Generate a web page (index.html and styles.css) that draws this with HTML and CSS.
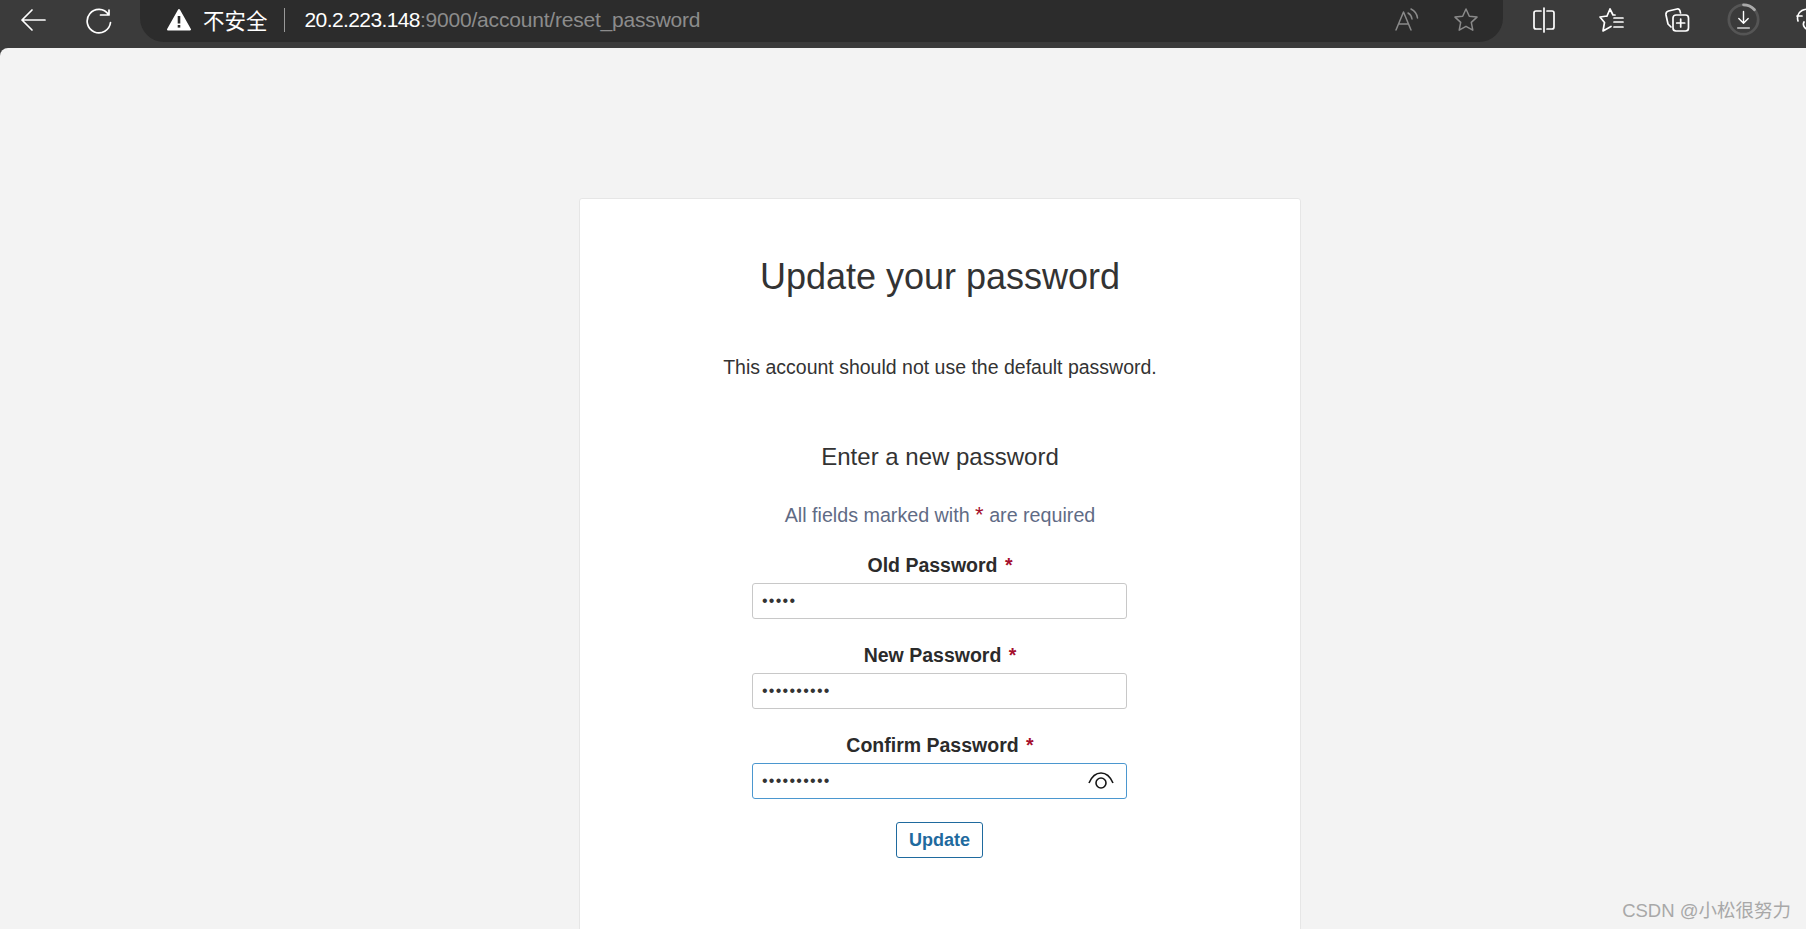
FILE: index.html
```html
<!DOCTYPE html>
<html lang="en">
<head>
    <meta charset="UTF-8">
    <title>Update your password</title>
    <link rel="stylesheet" href="styles.css">
</head>
<body>
    <!-- Browser toolbar -->
    <header class="toolbar">
        <svg class="nav-icon back-icon" viewBox="0 0 26 24"><path d="M25 12H2M12 2 2 12l10 10"/></svg>
        <svg class="nav-icon reload-icon" viewBox="0 0 26 26"><path d="M23 7v-5M23 7h-8.500M22.500 6.500a11.700 11.700 0 1 0 2 8"/></svg>
        <div class="address-bar">
            <svg class="warn-icon" viewBox="0 0 24 23"><path d="M12 2 23 21.500H1z" fill="#fff" stroke="#fff" stroke-width="2"/><rect x="10.700" y="8" width="2.600" height="7.500" fill="#2c2c2c"/><rect x="10.700" y="17" width="2.600" height="2.600" fill="#2c2c2c"/></svg>
            <span class="insecure">不安全</span>
            <span class="divider"></span>
            <span class="url"><span class="host">20.2.223.148</span>:9000/account/reset_password</span>
            <svg class="bar-icon read-icon" viewBox="0 0 24 24"><path d="M1 22 8.500 4 16 22M3.500 16h10M13 5c2 1 3.500 3 4 6M16 1c3 1.500 6 5 6.500 9"/></svg>
            <svg class="bar-icon star-icon" viewBox="0 0 26 26"><path d="m13 2 3.300 7.200 7.700.9-5.700 5.300 1.500 7.800L13 19.300l-6.800 3.900 1.500-7.800L2 10.100l7.700-.9z"/></svg>
        </div>
        <svg class="tool-icon split-icon" viewBox="0 0 26 26"><path d="M10 4H5a2 2 0 0 0-2 2v14a2 2 0 0 0 2 2h5M16 4h5a2 2 0 0 1 2 2v14a2 2 0 0 1-2 2h-5M13 1v24"/></svg>
        <svg class="tool-icon favs-icon" viewBox="0 0 26 26"><path d="m12 2 3 6h2M9 9l3-7M9 9 2 10l4.500 5.500L5 24l8-4.500M16 11h9M16 15h9M16 20h9"/></svg>
        <svg class="tool-icon coll-icon" viewBox="0 0 26 26"><path d="M7 20 4 17 2 8c-.300-2 .700-3.500 2.500-4L13 2c2-.300 3 .500 3.500 4"/><rect x="9" y="8" width="15.500" height="16" rx="3"/><path d="M16.700 12v8M12.700 16h8"/></svg>
        <div class="download">
            <svg class="ring-icon" viewBox="0 0 36 36"><circle cx="18" cy="18" r="16" stroke="#555"/><path d="M18 2a16 16 0 0 1 12 5.400" stroke="#aaa"/></svg>
            <svg class="down-icon" viewBox="0 0 16 20"><path d="M8 1v12M3 8.500 8 13.500l5-5"/><path d="M2 18.500h12" stroke="#aaa" stroke-width="2"/></svg>
        </div>
        <svg class="tool-icon last-icon" viewBox="0 0 26 26"><path d="M3 14A9 9 0 0 1 18 5M2 9l5 0M9 15a5 5 0 0 0 6 7"/></svg>
    </header>

    <main class="page">
        <div class="card">
            <h1 class="title">Update your password</h1>
            <p class="notice">This account should not use the default password.</p>
            <h2 class="subtitle">Enter a new password</h2>
            <p class="required-note">All fields marked with <span class="star">*</span> are required</p>

            <form class="form">
                <div class="field">
                    <label class="field-label" for="old">Old Password <span class="star">*</span></label>
                    <div class="input-box"><span class="dots">•••••</span></div>
                </div>
                <div class="field">
                    <label class="field-label" for="new">New Password <span class="star">*</span></label>
                    <div class="input-box"><span class="dots">••••••••••</span></div>
                </div>
                <div class="field">
                    <label class="field-label" for="confirm">Confirm Password <span class="star">*</span></label>
                    <div class="input-box focused">
                        <span class="dots">••••••••••</span>
                        <svg class="eye-icon" viewBox="0 0 26 18"><path d="M1 11C4 4 8 1 13 1s9 3 12 10"/><circle cx="13" cy="11" r="5"/></svg>
                    </div>
                </div>
                <button class="update-btn" type="button">Update</button>
            </form>
        </div>
    </main>

    <div class="watermark">CSDN @小松很努力</div>
</body>
</html>
```

FILE: styles.css
```css
html, body {
    height: 100%;
}

body {
    margin: 0;
    background: #3b3b3b;
    font-family: "Liberation Sans", Arial, "Noto Sans CJK SC", sans-serif;
    overflow: hidden;
    position: relative;
}

/* toolbar */
.toolbar {
    height: 48px;
    display: flex;
    align-items: flex-start;
    overflow: hidden;
}

.toolbar svg {
    fill: none;
    stroke-linecap: round;
    stroke-linejoin: round;
    flex: none;
}

.nav-icon {
    stroke: #fff;
    stroke-width: 1.700;
    margin-top: 8px;
}

.back-icon {
    width: 26px;
    height: 24px;
    margin-left: 20px;
}

.reload-icon {
    width: 26px;
    height: 26px;
    margin-left: 40px;
}

.address-bar {
    flex: none;
    width: 1363px;
    height: 42px;
    margin-left: 28px;
    background: #2c2c2c;
    border-radius: 0 0 24px 24px;
    display: flex;
    align-items: center;
    padding: 0 0 3px 27px;
    box-sizing: border-box;
    color: #fff;
}

.warn-icon {
    width: 24px;
    height: 23px;
    margin-right: 12px;
}

.insecure {
    font-size: 21.500px;
}

.divider {
    width: 1px;
    height: 24px;
    background: #999;
    margin: 0 20px 0 16px;
}

.url {
    font-size: 21px;
    color: #8c8c8c;
    letter-spacing: -0.200px;
    flex: 1;
}

.host {
    color: #fff;
    letter-spacing: -0.600px;
}

.bar-icon {
    stroke: #8a8a8a;
    stroke-width: 1.500;
}

.read-icon {
    width: 24px;
    height: 24px;
    margin-right: 34px;
}

.star-icon {
    width: 26px;
    height: 26px;
    margin-right: 24px;
}

.tool-icon {
    stroke: #fff;
    stroke-width: 1.700;
    width: 26px;
    height: 26px;
    margin-top: 7px;
}

.split-icon {
    margin-left: 28px;
}

.favs-icon {
    margin-left: 41px;
}

.coll-icon {
    margin-left: 40px;
}

.download {
    width: 33px;
    height: 33px;
    margin: 3px 0 0 37px;
    position: relative;
    flex: none;
}

.ring-icon {
    width: 33px;
    height: 33px;
    stroke-width: 3;
}

.down-icon {
    position: absolute;
    left: 9px;
    top: 7px;
    width: 15px;
    height: 20px;
    stroke: #fff;
    stroke-width: 1.500;
}

.last-icon {
    margin-left: 35px;
}

/* page */
.page {
    height: calc(100% - 48px);
    background: #f3f3f3;
    border-radius: 8px 0 0 0;
    padding-top: 150px;
    box-sizing: border-box;
    overflow: hidden;
}

.card {
    width: 722px;
    margin-left: 579px;
    background: #fff;
    border: 1px solid #e6e6e6;
    border-radius: 3px;
    box-sizing: border-box;
    text-align: center;
    color: #333;
    padding-top: 56px;
    height: 800px;
}

.title {
    margin: 0;
    font-size: 36px;
    font-weight: 400;
    line-height: 44px;
}

.notice {
    margin: 54px 0 0;
    font-size: 19.500px;
    line-height: 28px;
}

.subtitle {
    margin: 61px 0 0;
    font-size: 24px;
    font-weight: 400;
    line-height: 30px;
}

.required-note {
    margin: 29px 0 0;
    font-size: 19.700px;
    line-height: 28px;
    color: #5f6b85;
}

.star {
    color: #a50f2d;
}

.required-note .star {
    font-size: 22px;
    line-height: 0;
}

.form {
    margin-top: 23px;
}

.field {
    margin-bottom: 23px;
}

.field-label {
    display: block;
    font-size: 19.500px;
    font-weight: 700;
    line-height: 26px;
    margin-bottom: 5px;
    color: #2b2b2b;
}

.field-label .star {
    margin-left: 2px;
}

.input-box {
    width: 375px;
    height: 36px;
    margin-left: 172px;
    border: 1px solid #c8c8c8;
    border-radius: 3px;
    box-sizing: border-box;
    display: flex;
    align-items: center;
    justify-content: space-between;
    padding: 0 12px 0 9px;
}

.input-box.focused {
    border-color: #4b97cf;
}

.dots {
    font-size: 16px;
    letter-spacing: 1.260px;
    color: #333;
}

.eye-icon {
    width: 26px;
    height: 18px;
    fill: none;
    stroke: #161616;
    stroke-width: 1.600;
}

.update-btn {
    display: block;
    width: 87px;
    height: 36px;
    margin: 21px 0 0 316px;
    background: #fff;
    border: 1px solid #1f6a9e;
    border-radius: 3px;
    color: #1f6a9e;
    font: 700 18px "Liberation Sans", Arial, sans-serif;
}

.watermark {
    position: absolute;
    right: 15px;
    bottom: 7px;
    font-size: 18.500px;
    color: #a8a8a8;
}
```
